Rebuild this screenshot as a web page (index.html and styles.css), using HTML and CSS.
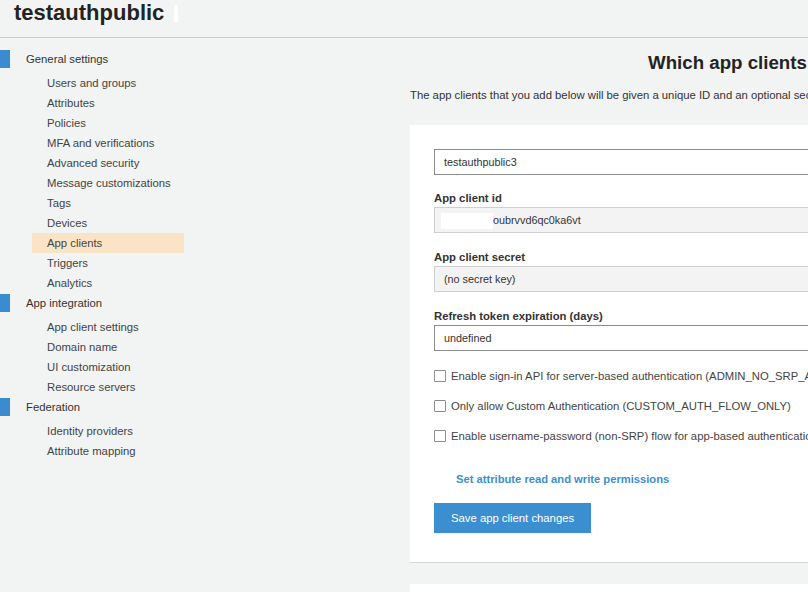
FILE: index.html
```html
<!DOCTYPE html>
<html>
<head>
<meta charset="utf-8">
<link rel="stylesheet" href="styles.css">
</head>
<body>
<header class="topbar">
  <h1 class="pool-name">testauthpublic<span class="redact-tail"></span></h1>
</header>
<div class="layout">
  <nav class="sidebar">
    <div class="section">General settings</div>
    <a class="item">Users and groups</a>
    <a class="item">Attributes</a>
    <a class="item">Policies</a>
    <a class="item">MFA and verifications</a>
    <a class="item">Advanced security</a>
    <a class="item">Message customizations</a>
    <a class="item">Tags</a>
    <a class="item">Devices</a>
    <a class="item active">App clients</a>
    <a class="item">Triggers</a>
    <a class="item">Analytics</a>
    <div class="section">App integration</div>
    <a class="item">App client settings</a>
    <a class="item">Domain name</a>
    <a class="item">UI customization</a>
    <a class="item">Resource servers</a>
    <div class="section">Federation</div>
    <a class="item">Identity providers</a>
    <a class="item">Attribute mapping</a>
  </nav>
  <main class="content">
    <h2 class="page-title">Which app clients will have access to this user pool?</h2>
    <p class="intro">The app clients that you add below will be given a unique ID and an optional secret key to access this user pool.</p>
    <section class="card">
      <div class="field-box">testauthpublic3</div>
      <div class="label first">App client id</div>
      <div class="field-box disabled"><span class="redact"></span>oubrvvd6qc0ka6vt</div>
      <div class="label">App client secret</div>
      <div class="field-box disabled">(no secret key)</div>
      <div class="label">Refresh token expiration (days)</div>
      <div class="field-box">undefined</div>
      <div class="checks">
        <label class="check"><span class="box"></span>Enable sign-in API for server-based authentication (ADMIN_NO_SRP_AUTH)</label>
        <label class="check"><span class="box"></span>Only allow Custom Authentication (CUSTOM_AUTH_FLOW_ONLY)</label>
        <label class="check"><span class="box"></span>Enable username-password (non-SRP) flow for app-based authentication (USER_PASSWORD_AUTH)</label>
      </div>
      <a class="perm-link">Set attribute read and write permissions</a>
      <button class="save-btn">Save app client changes</button>
    </section>
    <section class="card next"></section>
  </main>
</div>
</body>
</html>
```
FILE: styles.css
```css
html, body {
  margin: 0;
  padding: 0;
}
body {
  width: 808px;
  height: 592px;
  overflow: hidden;
  background: #f2f3f3;
  font-family: "Liberation Sans", Arial, sans-serif;
  color: #444;
}
.topbar {
  height: 37px;
  border-bottom: 1px solid #c9cbcb;
  box-sizing: content-box;
}
.pool-name {
  margin: 0;
  padding: 0 0 0 14px;
  font-size: 22px;
  line-height: 26px;
  font-weight: bold;
  color: #232323;
  white-space: nowrap;
}
.redact-tail {
  display: inline-block;
  width: 4px;
  height: 17px;
  margin-left: 10px;
  background: #fff;
  vertical-align: -2px;
}
.layout {
  display: flex;
  align-items: flex-start;
}
.sidebar {
  width: 184px;
  flex: none;
  padding-top: 11px;
  display: flex;
  flex-direction: column;
}
.section {
  position: relative;
  height: 20px;
  line-height: 20px;
  padding-left: 26px;
  margin-bottom: 4px;
  font-size: 11.3px;
  color: #333;
}
.section::before {
  content: "";
  position: absolute;
  left: 0;
  top: 1px;
  width: 10px;
  height: 18px;
  background: #3b8bd0;
}
.item {
  display: block;
  height: 20px;
  line-height: 20px;
  margin-left: 32px;
  padding-left: 15px;
  font-size: 11.3px;
  color: #444;
  white-space: nowrap;
}
.item.active {
  background: #fbe4c6;
}
.content {
  margin-left: 226px;
  width: 900px;
  flex: none;
}
.page-title {
  margin: 13px 0 0 0;
  padding-left: 238px;
  font-size: 18.7px;
  line-height: 24px;
  font-weight: bold;
  color: #232323;
  white-space: nowrap;
}
.intro {
  margin: 12px 0 0 0;
  font-size: 11.3px;
  line-height: 16px;
  color: #333;
  white-space: nowrap;
}
.card {
  margin-top: 22px;
  background: #fff;
  padding: 24px 0 29px 24px;
  display: flex;
  flex-direction: column;
  align-items: flex-start;
  border-bottom: 1px solid #d5d7d7;
}
.card.next {
  margin-top: 21px;
  height: 40px;
  padding: 0;
  border: 0;
}
.field-box {
  box-sizing: border-box;
  width: 700px;
  height: 26px;
  line-height: 24px;
  border: 1px solid #8c8c8c;
  padding-left: 9px;
  font-size: 10.8px;
  color: #333;
  white-space: nowrap;
}
.field-box.disabled {
  background: #f3f3f3;
  border-color: #cfcfcf;
}
.redact {
  display: inline-block;
  width: 52px;
  height: 16px;
  margin-left: -3px;
  vertical-align: middle;
  background: #fff;
}
.label {
  margin-top: 16px;
  margin-bottom: 1px;
  font-size: 11.3px;
  line-height: 16px;
  font-weight: bold;
  color: #333;
}
.label.first {
  margin-top: 15px;
}
.checks {
  margin-top: 15px;
  display: flex;
  flex-direction: column;
}
.check {
  display: flex;
  align-items: center;
  height: 20px;
  margin-bottom: 10px;
  font-size: 11.3px;
  color: #444;
  white-space: nowrap;
}
.box {
  box-sizing: border-box;
  width: 12px;
  height: 12px;
  border: 1px solid #8c8c8c;
  border-radius: 1px;
  margin-right: 5px;
  background: #fff;
  flex: none;
}
.perm-link {
  margin-top: 15px;
  margin-left: 22px;
  font-size: 11.2px;
  line-height: 16px;
  font-weight: bold;
  color: #3b8fd0;
}
.save-btn {
  margin-top: 16px;
  height: 30px;
  padding: 0 17px;
  border: 0;
  background: #3b8fd0;
  color: #fff;
  font-family: "Liberation Sans", Arial, sans-serif;
  font-size: 11.3px;
}
```
